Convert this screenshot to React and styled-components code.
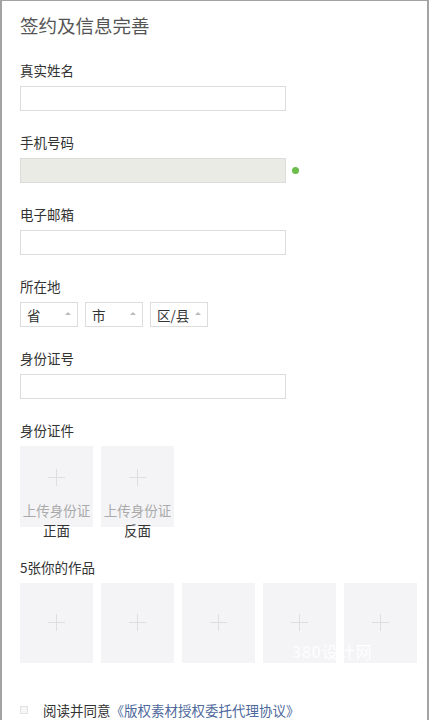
import React from 'react';
import styled, { createGlobalStyle } from 'styled-components';

const GlobalStyle = createGlobalStyle`
  html, body {
    margin: 0;
    padding: 0;
    background: #fff;
  }
  * {
    box-sizing: border-box;
  }
`;

const Page = styled.div`
  position: relative;
  width: 429px;
  height: 720px;
  overflow: hidden;
  border-top: 1px solid #a3a3a3;
  border-left: 2px solid #a3a3a3;
  border-right: 2px solid #a3a3a3;
  padding: 12px 0 0 18px;
  font-family: "Noto Sans CJK SC", "Noto Sans", sans-serif;
  color: #333;
`;

const Title = styled.h1`
  margin: 0 0 23px;
  font-size: 18.5px;
  line-height: 24px;
  font-weight: 400;
  color: #555;
`;

const Form = styled.div`
  display: flex;
  flex-direction: column;
`;

const Field = styled.div`
  display: flex;
  flex-direction: column;
  gap: 6px;
  margin-bottom: ${(p) => p.$after ?? 21}px;
`;

const Label = styled.div`
  font-size: 13.5px;
  line-height: 20px;
  color: #333;
`;

const Input = styled.div`
  width: 266px;
  height: 25px;
  border: 1px solid #dcdcdc;
  background: ${(p) => (p.$disabled ? '#ebebe6' : '#fff')};
`;

const InputRow = styled.div`
  display: flex;
  align-items: center;
  gap: 6px;
`;

const Dot = styled.span`
  width: 7px;
  height: 7px;
  border-radius: 50%;
  background: #6cbd4c;
`;

const SelectRow = styled.div`
  display: flex;
  gap: 7px;
`;

const Select = styled.div`
  width: 58px;
  height: 25px;
  border: 1px solid #dcdcdc;
  display: flex;
  align-items: center;
  justify-content: space-between;
  padding: 0 6px 0 6px;
  font-size: 13.5px;
  color: #333;

  &::after {
    content: '';
    border-left: 3px solid transparent;
    border-right: 3px solid transparent;
    border-bottom: 3px solid #bbb;
    margin-bottom: 2px;
  }
`;

const Uploads = styled.div`
  display: flex;
  gap: ${(p) => p.$gap}px;
`;

const UploadBox = styled.div`
  width: 73px;
  height: ${(p) => p.$h}px;
  background: #f4f4f6;
  display: flex;
  flex-direction: column;
  align-items: center;
  padding-top: ${(p) => p.$top}px;
`;

const Plus = styled.span`
  position: relative;
  width: 17px;
  height: 17px;
  flex: none;

  &::before,
  &::after {
    content: '';
    position: absolute;
    background: #dedede;
  }
  &::before {
    left: 8px;
    top: 0;
    width: 1px;
    height: 17px;
  }
  &::after {
    top: 8px;
    left: 0;
    width: 17px;
    height: 1px;
  }
`;

const UploadText = styled.div`
  margin-top: 14px;
  font-size: 13.5px;
  line-height: 20px;
  text-align: center;
  color: #aaa;
  white-space: nowrap;
`;

const Side = styled.div`
  color: #333;
`;

const Agree = styled.div`
  display: flex;
  align-items: center;
  margin-top: 37px;
  font-size: 13.5px;
  line-height: 20px;
  color: #333;
`;

const Check = styled.span`
  width: 8px;
  height: 8px;
  margin: 0 15px 0 0;
  border: 1px solid #e2e2e2;
  background: #f6f6f6;
`;

const Link = styled.a`
  color: #4f6a9c;
  text-decoration: none;
`;

const Watermark = styled.div`
  position: absolute;
  left: 290px;
  top: 638px;
  font-size: 16px;
  letter-spacing: 1px;
  color: rgba(255, 255, 255, 0.95);
  font-family: "Noto Sans CJK SC", sans-serif;
`;

const fields = [
  { label: '真实姓名' },
  { label: '手机号码', disabled: true },
  { label: '电子邮箱' },
];

export default function App() {
  return (
    <Page>
      <GlobalStyle />
      <Title>签约及信息完善</Title>
      <Form>
        {fields.map((f) => (
          <Field key={f.label}>
            <Label>{f.label}</Label>
            {f.disabled ? (
              <InputRow>
                <Input $disabled />
                <Dot />
              </InputRow>
            ) : (
              <Input />
            )}
          </Field>
        ))}
        <Field>
          <Label>所在地</Label>
          <SelectRow>
            <Select>省</Select>
            <Select>市</Select>
            <Select>区/县</Select>
          </SelectRow>
        </Field>
        <Field>
          <Label>身份证号</Label>
          <Input />
        </Field>
        <Field $after={30}>
          <Label>身份证件</Label>
          <Uploads $gap={8}>
            {['正面', '反面'].map((s) => (
              <UploadBox key={s} $h={81} $top={23}>
                <Plus />
                <UploadText>
                  上传身份证
                  <Side>{s}</Side>
                </UploadText>
              </UploadBox>
            ))}
          </Uploads>
        </Field>
        <Field $after={0}>
          <Label>5张你的作品</Label>
          <Uploads $gap={8}>
            {[1, 2, 3, 4, 5].map((n) => (
              <UploadBox key={n} $h={80} $top={31}>
                <Plus />
              </UploadBox>
            ))}
          </Uploads>
        </Field>
        <Agree>
          <Check />
          阅读并同意<Link>《版权素材授权委托代理协议》</Link>
        </Agree>
      </Form>
      <Watermark>380设计网</Watermark>
    </Page>
  );
}
